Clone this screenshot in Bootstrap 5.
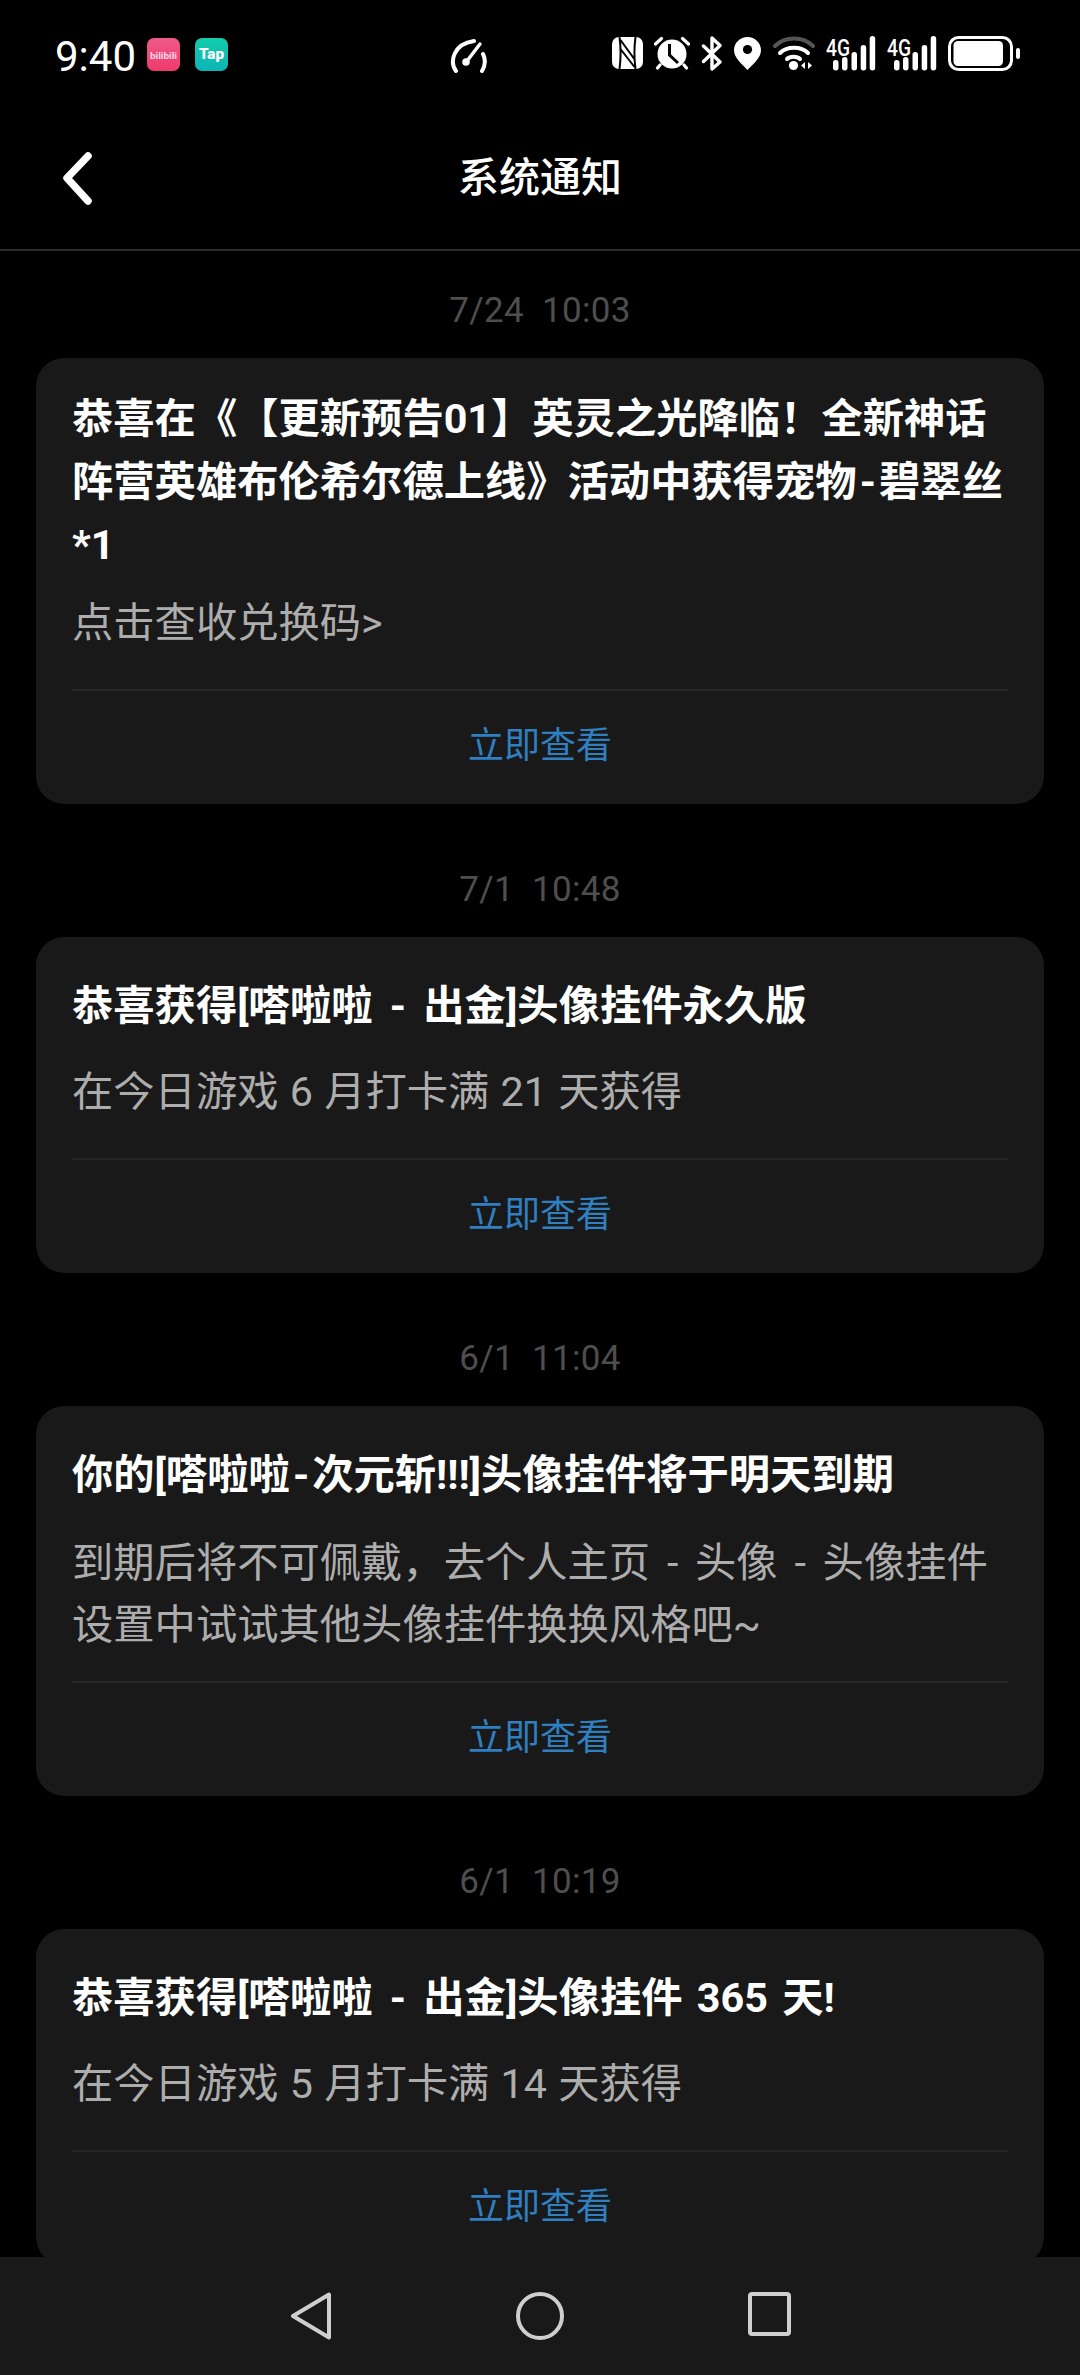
<!DOCTYPE html>
<html lang="zh-CN">
<head>
  <meta charset="UTF-8">
  <title>系统通知</title>
  <meta name="viewport" content="width=device-width, initial-scale=1">
  <link href="https://cdn.jsdelivr.net/npm/bootstrap@5.3.3/dist/css/bootstrap.min.css" rel="stylesheet">
  <style>
    html, body {
      height: 2375px;
    }
    body {
      background-color: #000;
      color: #fff;
      font-family: Roboto, "Noto Sans CJK SC", sans-serif;
      text-spacing-trim: space-all;
      overflow: hidden;
    }
    .status-row {
      height: 104px;
      padding: 36px 0 0 55px;
      flex-shrink: 0;
    }
    .status-time {
      font-size: 42px;
      line-height: 42px;
      width: 92px;
    }
    .app-icons {
      gap: 15px;
      width: 81px;
      padding-top: 2px;
    }
    .speed-icon {
      margin-left: 222px;
      margin-top: 2px;
    }
    .status-icons {
      gap: 11px;
      margin-left: 124px;
    }
    .top-bar {
      height: 147px;
      padding-top: 5px;
      border-bottom: 2px solid #2c2c2c;
      flex-shrink: 0;
    }
    .back-box {
      width: 120px;
      padding-left: 60px;
    }
    .top-title {
      font-size: 41px;
      font-weight: 500;
    }
    .msg-list {
      padding: 35px 36px 0;
      overflow: hidden;
      min-height: 0;
    }
    .msg-date {
      color: #4e4e4e;
      font-size: 35px;
      line-height: 50px;
      letter-spacing: .3px;
      white-space: pre;
      margin-bottom: 22px;
    }
    .msg-card {
      --bs-card-bg: #191919;
      --bs-card-border-width: 0;
      --bs-card-border-radius: 28px;
      margin-bottom: 61px;
      flex-shrink: 0;
    }
    .msg-main {
      padding: 30px 36px 0;
    }
    .msg-title {
      color: #fff;
      font-size: 41.3px;
      font-weight: 700;
      line-height: 63px;
      min-height: 79px;
      margin-bottom: 15px;
      word-spacing: 4px;
    }
    .msg-text {
      color: #adadad;
      font-size: 41.3px;
      line-height: 62px;
      min-height: 97px;
      padding-bottom: 24px;
      margin-bottom: 0;
      word-spacing: 1px;
    }
    .msg-text.two-lines {
      margin-top: 17px;
      padding-bottom: 25px;
    }
    .dash-gap {
      padding: 0 3px;
    }
    .msg-text .dash-gap {
      padding: 0 5.5px;
    }
    .msg-foot {
      --bs-card-cap-bg: transparent;
      --bs-card-cap-padding-y: 0;
      --bs-card-cap-padding-x: 0;
      border-top: 2px solid #262626;
      margin: 0 36px;
      height: 115px;
      padding-bottom: 4px;
    }
    .msg-action {
      color: #2f7fc1;
      font-size: 36px;
    }
    .bottom-bar {
      height: 118px;
      background-color: #191919;
      gap: 184px;
      padding-top: 35px;
      flex-shrink: 0;
    }
  </style>
</head>
<body class="d-flex flex-column">

  <!-- status bar -->
  <div class="status-row d-flex align-items-start">
    <div class="status-time">9:40</div>
    <div class="app-icons d-flex">
      <svg width="33" height="33" viewBox="0 0 33 33">
        <defs><linearGradient id="biliBg" x1="0" y1="0" x2="0" y2="1"><stop offset="0" stop-color="#ef5a8a"/><stop offset="1" stop-color="#ee3a6c"/></linearGradient></defs>
        <rect width="33" height="33" rx="7" fill="url(#biliBg)"/>
        <text x="16.5" y="21" text-anchor="middle" font-family="Roboto" font-weight="700" font-size="9" fill="#ffd9e4" textLength="27" lengthAdjust="spacingAndGlyphs">bilibili</text>
      </svg>
      <svg width="33" height="33" viewBox="0 0 33 33">
        <defs><linearGradient id="tapBg" x1="0" y1="0" x2="0" y2="1"><stop offset="0" stop-color="#14cdaa"/><stop offset="1" stop-color="#0cb4b6"/></linearGradient></defs>
        <rect width="33" height="33" rx="7" fill="url(#tapBg)"/>
        <text x="16.5" y="21" text-anchor="middle" font-family="Roboto" font-weight="900" font-size="14" fill="#fff" textLength="25" lengthAdjust="spacingAndGlyphs">Tap</text>
      </svg>
    </div>
    <svg class="speed-icon" width="38" height="35" viewBox="0 0 38 35" fill="none" stroke="#fff" stroke-width="4" stroke-linecap="round">
      <path d="M6 33 C-0.5 24 3 6 24 3"/>
      <path d="M33 16 C36 22 35 28 32 33"/>
      <path d="M17 23 L30 6" stroke-width="3.4"/>
      <circle cx="16" cy="24" r="3" fill="#fff" stroke-width="1.5"/>
    </svg>
    <div class="status-icons d-flex">
      <!-- nfc -->
      <svg width="31" height="33" viewBox="0 0 31 33">
        <rect y="1" width="31" height="32" rx="7" fill="#fff"/>
        <path d="M7.5 1 C9 12 9 22 7.5 33 M23.5 1 C22 12 22 22 23.5 33 M8.5 4 L23 24 M8.5 13 L22.5 31" fill="none" stroke="#000" stroke-width="2"/>
      </svg>
      <!-- alarm -->
      <svg width="36" height="34" viewBox="0 0 36 34">
        <circle cx="18" cy="18" r="14.5" fill="#fff"/>
        <path d="M1.5 8 L7.5 2.5 M28.5 2.5 L34.5 8 M6 29 L3.5 32 M30 29 L32.5 32" stroke="#fff" stroke-width="3.2" stroke-linecap="round"/>
        <path d="M15.5 8 V19 L24 27" fill="none" stroke="#000" stroke-width="3"/>
      </svg>
      <!-- bluetooth -->
      <svg width="22" height="35" viewBox="0 0 22 35" fill="none" stroke="#fff" stroke-width="3.4" stroke-linecap="round" stroke-linejoin="round">
        <path d="M2.5 10 L19 26 L11 33 V2 L19 9.5 L2.5 25.5"/>
      </svg>
      <!-- location -->
      <svg width="27" height="34" viewBox="0 0 27 34">
        <path d="M13.5 1 C6 1 0 7 0 14 C0 22 8 28 13.5 34 C19 28 27 22 27 14 C27 7 21 1 13.5 1Z" fill="#fff"/>
        <circle cx="13.5" cy="13.5" r="4.6" fill="#000"/>
      </svg>
      <!-- wifi -->
      <svg width="43" height="35" viewBox="0 0 43 35" fill="none" stroke-linecap="round">
        <path d="M3 10 C13 0 31 0 41 10" stroke="#555" stroke-width="4"/>
        <path d="M8 17 C15 10 29 10 36 17" stroke="#fff" stroke-width="4"/>
        <path d="M15 23 C18 20 25 20 28 23" stroke="#fff" stroke-width="4"/>
        <circle cx="21.5" cy="29.5" r="4.6" fill="#fff"/>
        <path d="M33 26 V33 L29 29.5Z M36 26 V33 L40 29.5Z" fill="#fff"/>
      </svg>
      <!-- 4g signal -->
      <svg width="50" height="35" viewBox="0 0 50 35" fill="#fff">
        <text x="0" y="19.5" font-family="Roboto" font-weight="500" font-size="23" textLength="24" lengthAdjust="spacingAndGlyphs">4G</text>
        <rect x="7" y="24" width="5.5" height="10.5" rx="2.7"/>
        <rect x="16" y="21" width="5.5" height="13.5" rx="2.7"/>
        <rect x="25.5" y="16" width="5.5" height="18.5" rx="2.7"/>
        <rect x="34.7" y="9" width="5.5" height="25.5" rx="2.7"/>
        <rect x="43.7" y="0" width="5.5" height="34.5" rx="2.7"/>
      </svg>
      <svg width="50" height="35" viewBox="0 0 50 35" fill="#fff">
        <text x="0" y="19.5" font-family="Roboto" font-weight="500" font-size="23" textLength="24" lengthAdjust="spacingAndGlyphs">4G</text>
        <rect x="7" y="24" width="5.5" height="10.5" rx="2.7"/>
        <rect x="16" y="21" width="5.5" height="13.5" rx="2.7"/>
        <rect x="25.5" y="16" width="5.5" height="18.5" rx="2.7"/>
        <rect x="34.7" y="9" width="5.5" height="25.5" rx="2.7"/>
        <rect x="43.7" y="0" width="5.5" height="34.5" rx="2.7"/>
      </svg>
      <!-- battery -->
      <svg width="72" height="35" viewBox="0 0 72 35">
        <rect x="1.5" y="1.5" width="62" height="32" rx="9" fill="none" stroke="#fff" stroke-width="3"/>
        <rect x="5.5" y="5" width="49.5" height="25" rx="4.5" fill="#fff"/>
        <rect x="68" y="12" width="4" height="11" rx="2" fill="#fff"/>
      </svg>
    </div>
  </div>

  <!-- title bar -->
  <div class="top-bar d-flex align-items-center">
    <div class="back-box">
      <svg width="36" height="56" viewBox="0 0 36 56" fill="none" stroke="#fff" stroke-width="7.5" stroke-linecap="round" stroke-linejoin="round">
        <path d="M28 5 L7 27 L28 50"/>
      </svg>
    </div>
    <div class="top-title flex-grow-1 text-center">系统通知</div>
    <div class="back-box"></div>
  </div>

  <!-- messages -->
  <div class="msg-list flex-grow-1 d-flex flex-column">
    <div class="msg-date text-center">7/24  10:03</div>
    <div class="card msg-card">
      <div class="msg-main">
        <div class="msg-title">恭喜在《【更新预告01】英灵之光降临&#xFF01;全新神话<br>阵营英雄布伦希尔德上线》活动中获得宠物<span class="dash-gap">-</span>碧翠丝<br>*1</div>
        <p class="msg-text">点击查收兑换码&gt;</p>
      </div>
      <div class="card-footer msg-foot d-flex align-items-center justify-content-center">
        <a class="msg-action text-decoration-none" href="#">立即查看</a>
      </div>
    </div>

    <div class="msg-date text-center">7/1  10:48</div>
    <div class="card msg-card">
      <div class="msg-main">
        <div class="msg-title d-flex align-items-center"><span>恭喜获得[嗒啦啦 <span class="dash-gap">-</span> 出金]头像挂件永久版</span></div>
        <p class="msg-text">在今日游戏 6 月打卡满 21 天获得</p>
      </div>
      <div class="card-footer msg-foot d-flex align-items-center justify-content-center">
        <a class="msg-action text-decoration-none" href="#">立即查看</a>
      </div>
    </div>

    <div class="msg-date text-center">6/1  11:04</div>
    <div class="card msg-card">
      <div class="msg-main">
        <div class="msg-title d-flex align-items-center"><span>你的[嗒啦啦<span class="dash-gap">-</span>次元斩!!!]头像挂件将于明天到期</span></div>
        <p class="msg-text two-lines">到期后将不可佩戴&#xFF0C;去个人主页 <span class="dash-gap">-</span> 头像 <span class="dash-gap">-</span> 头像挂件<br>设置中试试其他头像挂件换换风格吧~</p>
      </div>
      <div class="card-footer msg-foot d-flex align-items-center justify-content-center">
        <a class="msg-action text-decoration-none" href="#">立即查看</a>
      </div>
    </div>

    <div class="msg-date text-center">6/1  10:19</div>
    <div class="card msg-card">
      <div class="msg-main">
        <div class="msg-title d-flex align-items-center"><span>恭喜获得[嗒啦啦 <span class="dash-gap">-</span> 出金]头像挂件 365 天!</span></div>
        <p class="msg-text">在今日游戏 5 月打卡满 14 天获得</p>
      </div>
      <div class="card-footer msg-foot d-flex align-items-center justify-content-center">
        <a class="msg-action text-decoration-none" href="#">立即查看</a>
      </div>
    </div>
  </div>

  <!-- android nav buttons -->
  <div class="bottom-bar d-flex justify-content-center align-items-start">
    <svg width="42" height="48" viewBox="0 0 42 48" fill="none" stroke="#cfcfcf" stroke-width="4" stroke-linejoin="round">
      <path d="M39 2.5 V45.5 L3 24Z"/>
    </svg>
    <svg width="48" height="48" viewBox="0 0 48 48" fill="none" stroke="#cfcfcf" stroke-width="4">
      <circle cx="24" cy="24" r="22"/>
    </svg>
    <svg width="43" height="44" viewBox="0 0 43 44" fill="none" stroke="#cfcfcf" stroke-width="4" stroke-linejoin="round">
      <rect x="2" y="2" width="39" height="40" rx="2"/>
    </svg>
  </div>

  <script src="https://cdn.jsdelivr.net/npm/bootstrap@5.3.3/dist/js/bootstrap.bundle.min.js"></script>
</body>
</html>
